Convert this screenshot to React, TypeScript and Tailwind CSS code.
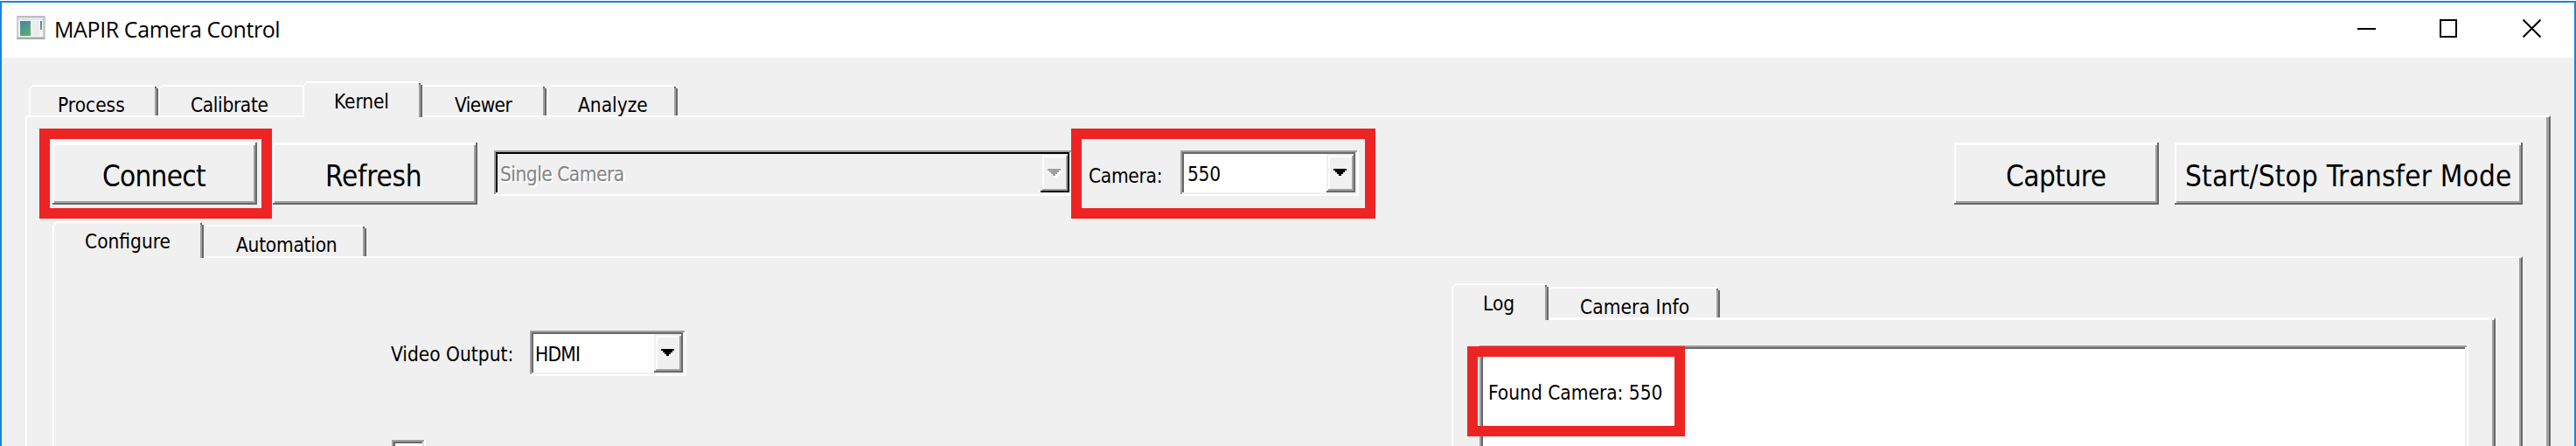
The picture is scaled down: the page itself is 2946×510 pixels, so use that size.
import React from "react";

const uiFont =
  "font-['DejaVu_Sans_Condensed','DejaVu_Sans',sans-serif] [font-stretch:condensed]";
const bodyText = "text-[22.5px] leading-[24px] whitespace-nowrap";

type TabProps = {
  label: string;
  size: string;
  text: string;
  selected?: boolean;
  left?: boolean;
  right?: boolean;
};

function Tab({ label, size, text, selected = false, left = true, right = true }: TabProps) {
  return (
    <div className={`flex shrink-0 flex-col bg-[#f0f0f0] ${size} ${selected ? "relative" : ""}`}>
      <div className={`h-[2px] shrink-0 bg-white ${left ? "ml-[4px]" : ""} ${right ? "mr-[4px]" : ""}`} />
      <div className="flex h-[2px] shrink-0 justify-between">
        <div className={`ml-[2px] w-[2px] ${left ? "bg-white" : ""}`} />
        <div className={`mr-[2px] w-[2px] ${right ? "bg-[#696969]" : ""}`} />
      </div>
      <div
        className={`min-h-0 flex-1 pt-[7px] ${left ? "border-l-2 border-l-white" : "pl-[2px]"} ${
          right ? "border-r-2 border-r-[#696969] shadow-[inset_-2px_0_0_#a0a0a0]" : ""
        }`}
      >
        <div className={`${bodyText} ${text}`}>{label}</div>
      </div>
    </div>
  );
}

function PushButton({ label, size, text }: { label: string; size: string; text: string }) {
  return (
    <button
      className={`h-[71px] shrink-0 bg-[#f0f0f0] pt-[19px] pb-[12px] text-left text-[33px] leading-[40px] whitespace-nowrap shadow-[inset_-2px_-2px_0_#696969,inset_2px_3px_0_#fff,inset_-4px_-4px_0_#a0a0a0] ${size}`}
    >
      <span className={`block ${text}`}>{label}</span>
    </button>
  );
}

const arrowPath = "M0 0h15v2h-2v2h-2v2h-2v2h-3v-2h-2v-2h-2v-2H0z";

function Combo({
  value,
  size,
  text,
  disabled = false,
}: {
  value: string;
  size: string;
  text: string;
  disabled?: boolean;
}) {
  return (
    <div
      className={`flex h-[52px] shrink-0 justify-between p-[4px] ${size} ${
        disabled
          ? "bg-[#f0f0f0] text-[#858585] shadow-[inset_-2px_-2px_0_#fff,inset_2px_2px_0_#a0a0a0,inset_-4px_-4px_0_#f0f0f0,inset_4px_4px_0_#000]"
          : "bg-white shadow-[inset_-2px_-2px_0_#fff,inset_2px_2px_0_#a0a0a0,inset_-4px_-4px_0_#f0f0f0,inset_4px_4px_0_#696969]"
      }`}
    >
      <div className={`${bodyText} ${text} ${disabled ? "[text-shadow:2px_2px_0_#fff]" : ""}`}>{value}</div>
      <div
        className={`h-[44px] w-[33px] bg-[#f0f0f0] pt-[17px] pl-[8px] ${
          disabled
            ? "shadow-[inset_-2px_-2px_0_#000,inset_2px_2px_0_#f0f0f0,inset_-4px_-4px_0_#a0a0a0,inset_4px_4px_0_#fff]"
            : "shadow-[inset_-2px_-2px_0_#696969,inset_2px_2px_0_#f0f0f0,inset_-4px_-4px_0_#a0a0a0,inset_4px_4px_0_#fff]"
        }`}
      >
        <svg width="17" height="10" viewBox="0 0 17 10" shapeRendering="crispEdges">
          {disabled && <path d={arrowPath} fill="#fff" transform="translate(2 2)" />}
          <path d={arrowPath} fill={disabled ? "#a0a0a0" : "#000"} />
        </svg>
      </div>
    </div>
  );
}

function Highlight({ place }: { place: string }) {
  return <div className={`absolute z-20 border-[12px] border-[#ee2424] ${place}`} />;
}

function AppIcon() {
  return (
    <svg className="mt-[15px] ml-[17px] shrink-0" width="33" height="28" viewBox="0 0 33 28">
      <defs>
        <linearGradient id="pane" x1="0" y1="0" x2="0.5" y2="1">
          <stop offset="0" stopColor="#4a7fa8" />
          <stop offset="1" stopColor="#58ad74" />
        </linearGradient>
      </defs>
      <rect x="0" y="0" width="33" height="27" rx="1" fill="#c9cccf" />
      <rect x="0.5" y="0.5" width="31" height="1.5" fill="#b4b7b9" />
      <rect x="2" y="2" width="28" height="3" fill="#dfe5ee" />
      <rect x="2" y="5" width="28" height="19" fill="#f4f5f6" />
      <rect x="4" y="6" width="12" height="17" fill="url(#pane)" />
      <rect x="18" y="6" width="8" height="17" fill="#ececec" />
      <rect x="27" y="6" width="2" height="10" fill="url(#pane)" />
      <rect x="0" y="25" width="32" height="2" fill="#a9abac" />
    </svg>
  );
}

function TitleBar() {
  return (
    <header className="flex h-[63px] bg-white">
      <AppIcon />
      <h1 className="mt-[13px] ml-[10px] flex-1 font-['Open_Sans',sans-serif] text-[25px] leading-[34px] tracking-[-0.4px] whitespace-nowrap [font-stretch:normal]">
        MAPIR Camera Control
      </h1>
      <svg className="mt-[19px] mr-[38px]" width="210" height="21" viewBox="0 0 210 21" fill="none" stroke="#000" strokeWidth="2">
        <path d="M0 11H21" />
        <rect x="95" y="1" width="18" height="19" />
        <path d="M189.500 0.500L209.500 20.500M209.500 0.500L189.500 20.500" />
      </svg>
    </header>
  );
}

function LogPanel() {
  return (
    <section className="mt-[29px] w-[1194px] shrink-0">
      <div className="flex items-end">
        <Tab label="Log" selected size="w-[111px] h-[42px] mb-[-3px]" text="pl-[34px]" />
        <Tab label="Camera Info" left={false} size="w-[196px] h-[35px]" text="pl-[34px] tracking-[0.1px]" />
      </div>
      <div className="h-[147px] border-t-[3px] border-r-2 border-l-2 border-t-white border-r-[#696969] border-l-white pt-[29px] pl-[30px] shadow-[inset_-2px_0_0_#a0a0a0]">
        <div className="h-[130px] w-[1131px] bg-white pt-[42px] pl-[10px] shadow-[inset_-2px_-2px_0_#fff,inset_2px_2px_0_#a0a0a0,inset_-4px_-4px_0_#f0f0f0,inset_4px_4px_0_#696969]">
          <p className={bodyText}>Found Camera: 550</p>
        </div>
      </div>
    </section>
  );
}

function ConfigurePane() {
  return (
    <div className="flex h-[217px] w-[2825px] justify-between border-t-2 border-r-2 border-l-2 border-t-white border-r-[#696969] border-l-white pr-[29px] shadow-[inset_-2px_0_0_#a0a0a0]">
      <div className="pt-[83px] pl-[385px]">
        <div className="flex">
          <div className={`w-[159px] pt-[15px] ${bodyText}`}>Video Output:</div>
          <Combo value="HDMI" size="w-[179px]" text="pl-[2px] pt-[11px] tracking-[-0.8px]" />
        </div>
        <div className="mt-[73px] ml-[1px] h-[39px] w-[39px] bg-white shadow-[inset_-2px_-2px_0_#fff,inset_2px_2px_0_#a0a0a0,inset_-4px_-4px_0_#e3e3e3,inset_4px_4px_0_#696969]" />
      </div>
      <LogPanel />
    </div>
  );
}

export default function App() {
  return (
    <div className="h-[510px] w-[2946px] overflow-hidden bg-white pt-[1px]">
      <div className={`relative h-[509px] overflow-hidden border-t-2 border-r-2 border-l-2 border-[#1a84d9] bg-[#f0f0f0] text-black ${uiFont}`}>
        <TitleBar />
        <nav className="mt-[27px] ml-[31px] flex items-end">
          <Tab label="Process" size="w-[148px] h-[35px]" text="pl-[31px]" />
          <Tab label="Calibrate" right={false} size="w-[165px] h-[35px]" text="pl-[35px] tracking-[-0.35px]" />
          <Tab label="Kernel" selected size="w-[137px] h-[41px] mb-[-2px]" text="pl-[34px] tracking-[-0.1px]" />
          <Tab label="Viewer" left={false} size="w-[142px] h-[35px]" text="pl-[35px] tracking-[-0.6px]" />
          <Tab label="Analyze" size="w-[150px] h-[35px]" text="pl-[34px]" />
        </nav>
        <main className="ml-[27px] h-[378px] w-[2888px] border-t-2 border-r-2 border-l-2 border-t-white border-r-[#696969] border-l-white pt-[29px] pl-[29px] shadow-[inset_-3px_0_0_#a0a0a0]">
          <div className="flex w-[2825px]">
            <PushButton label="Connect" size="w-[234px]" text="pl-[57px] tracking-[-0.7px]" />
            <PushButton label="Refresh" size="w-[234px] ml-[18px]" text="pl-[60px] tracking-[-0.2px]" />
            <div className="mt-[9px] ml-[19px] flex">
              <Combo value="Single Camera" size="w-[662px]" text="pl-[3px] pt-[11px] tracking-[-0.5px]" disabled />
              <div className={`w-[123px] pt-[17px] pl-[18px] tracking-[-0.3px] ${bodyText}`}>Camera:</div>
              <Combo value="550" size="w-[204px]" text="pl-[4px] pt-[11px] tracking-[-0.3px]" />
            </div>
            <div className="flex flex-1 justify-end gap-[18px]">
              <PushButton label="Capture" size="w-[234px]" text="pl-[59px] tracking-[-0.5px]" />
              <PushButton label="Start/Stop Transfer Mode" size="w-[398px]" text="pl-[12px] tracking-[0.2px]" />
            </div>
          </div>
          <div className="mt-[19px] flex items-end">
            <Tab label="Configure" selected size="w-[173px] h-[42px] mb-[-2px]" text="pl-[35px]" />
            <Tab label="Automation" left={false} size="w-[186px] h-[36px]" text="pl-[35px] tracking-[-0.25px]" />
          </div>
          <ConfigurePane />
        </main>
        <Highlight place="top-[144px] left-[43px] h-[103px] w-[266px]" />
        <Highlight place="top-[144px] left-[1223px] h-[103px] w-[348px]" />
        <Highlight place="top-[393px] left-[1676px] h-[103px] w-[249px]" />
      </div>
    </div>
  );
}
